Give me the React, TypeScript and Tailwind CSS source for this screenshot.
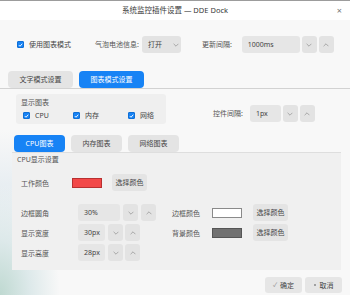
import React from 'react';

const Check = () => (
  <span className="w-[7px] h-[7px] rounded-[1px] bg-[#1783f5] border border-[#0f6fd6] flex items-center justify-center shrink-0">
    <svg viewBox="0 0 8 8" className="w-[6px] h-[6px]">
      <path d="M1.3 4.1 3.2 6 6.8 1.9" stroke="white" strokeWidth="1.5" fill="none" />
    </svg>
  </span>
);

const Chevron = ({ up = false }: { up?: boolean }) => (
  <svg viewBox="0 0 10 6" className="w-[6px] h-[4px]">
    <path d={up ? 'M1 5l4-4 4 4' : 'M1 1l4 4 4-4'} stroke="#8a8a8a" strokeWidth="1.1" fill="none" />
  </svg>
);

const Spin = ({ up = false }: { up?: boolean }) => (
  <button className="w-[15px] h-[17px] rounded-[3px] bg-[#e3e3e3] flex items-center justify-center shrink-0">
    <Chevron up={up} />
  </button>
);

const Field = ({ value, w }: { value: string; w: string }) => (
  <div className={`${w} h-[17px] rounded-[3px] bg-[#e6e6e6] flex items-center pl-[6px] text-[#444] shrink-0`}>{value}</div>
);

const ColorBtn = () => (
  <button className="w-[35px] h-[17px] rounded-[3px] bg-[#e4e4e4] flex items-center justify-center text-[#444] shrink-0">
    选择颜色
  </button>
);

export default function App() {
  return (
    <div className="w-[350px] h-[295px] flex flex-col overflow-hidden font-['Noto_Sans','Noto_Sans_CJK_SC',sans-serif] text-[7px] leading-none text-[#555]">
      {/* TITLE BAR */}
      <div className="h-[20px] shrink-0 bg-white border-t border-[#9c9c9c] grid grid-cols-[1fr_auto_1fr] items-center">
        <span />
        <span className="text-[7.5px] text-[#3a3a3a]">系统监控插件设置 — DDE Dock</span>
        <span className="flex justify-end pr-[8px] text-[9px] text-[#777]">×</span>
      </div>

      {/* BODY */}
      <div className="flex-1 flex flex-col bg-[#f8f8f8] bg-[radial-gradient(ellipse_60px_110px_at_0%_100%,#bfd9d1,#dde9ea_50%,transparent_100%),linear-gradient(to_bottom,transparent_40%,#e8eef2_60%,transparent_100%)] bg-no-repeat bg-[length:100%_100%,20px_100%]">
        {/* top options */}
        <div className="mt-[16px] h-[17px] flex items-center pl-[17px]">
          <Check />
          <span className="ml-[5px] text-[#444]">使用图表模式</span>
          <span className="ml-[24px]">气泡电池信息:</span>
          <button className="ml-[3px] w-[39px] h-[17px] rounded-[3px] bg-[#e3e3e3] flex items-center pl-[6px] text-[#444]">
            打开
            <span className="ml-[11px] flex"><Chevron /></span>
          </button>
          <span className="ml-[21px]">更新间隔:</span>
          <div className="ml-[10px]"><Field value="1000ms" w="w-[58px]" /></div>
          <div className="ml-[2px]"><Spin /></div>
          <div className="ml-[2px]"><Spin up /></div>
        </div>

        {/* mode tabs */}
        <div className="mt-[18px] h-[18px] flex gap-[6px] pl-[8px] border-b border-[#d2d2d2]">
          <button className="w-[65px] h-[17px] rounded-[4px] bg-[#e4e4e4] text-[#444]">文字模式设置</button>
          <button className="w-[65px] h-[17px] rounded-[4px] bg-[#1783f5] text-white">图表模式设置</button>
        </div>

        {/* chart toggles */}
        <div className="mt-[5px] flex">
          <div className="ml-[16px] w-[150px] h-[30px] rounded-[3px] bg-[#efefef] flex flex-col pl-[5px]">
            <span className="mt-[5px] text-[#555]">显示图表</span>
            <div className="mt-[6px] flex items-center pl-[2px] text-[#444]">
              <Check />
              <span className="ml-[5px] w-[38px]">CPU</span>
              <Check />
              <span className="ml-[5px] w-[43px]">内存</span>
              <Check />
              <span className="ml-[5px]">网络</span>
            </div>
          </div>
          <div className="ml-[47px] mt-[11px] h-[17px] flex items-center">
            <span>控件间隔:</span>
            <div className="ml-[7px]"><Field value="1px" w="w-[31px]" /></div>
            <div className="ml-[2px]"><Spin /></div>
            <div className="ml-[2px]"><Spin up /></div>
          </div>
        </div>

        {/* chart tabs */}
        <div className="mt-[11px] h-[17px] flex gap-[6px] pl-[14px]">
          <button className="w-[51px] h-[17px] rounded-[4px] bg-[#1783f5] text-white">CPU图表</button>
          <button className="w-[51px] h-[17px] rounded-[4px] bg-[#e4e4e4] text-[#444]">内存图表</button>
          <button className="w-[51px] h-[17px] rounded-[4px] bg-[#e4e4e4] text-[#444]">网络图表</button>
        </div>

        {/* CPU panel */}
        <div className="ml-[12px] w-[329px] h-[118px] bg-[#f0f0f0] border-t border-[#dedede] flex flex-col">
          <span className="mt-[3px] pl-[5px] text-[#555]">CPU显示设置</span>

          <div className="mt-[11px] pl-[9px] flex items-center h-[17px]">
            <span className="w-[51px] pt-[2px]">工作颜色</span>
            <span className="w-[30px] h-[10px] bg-[#f24848] border border-[#b83030]" />
            <div className="ml-[10px]"><ColorBtn /></div>
          </div>

          <div className="mt-[13px] pl-[9px] flex items-center h-[17px]">
            <div className="w-[151px] flex items-center">
              <span className="w-[57px] pt-[2px]">边框圆角</span>
              <Field value="30%" w="w-[42px]" />
              <div className="ml-[3px]"><Spin /></div>
              <div className="ml-[3px]"><Spin up /></div>
            </div>
            <span className="w-[40px] pt-[2px]">边框颜色</span>
            <span className="w-[30px] h-[10px] bg-white border border-[#8a8a8a]" />
            <div className="ml-[11px]"><ColorBtn /></div>
          </div>

          <div className="mt-[3px] pl-[9px] flex items-center h-[17px]">
            <div className="w-[151px] flex items-center">
              <span className="w-[57px] pt-[2px]">显示宽度</span>
              <Field value="30px" w="w-[27px]" />
              <div className="ml-[3px]"><Spin /></div>
              <div className="ml-[2px]"><Spin up /></div>
            </div>
            <span className="w-[40px] pt-[2px]">背景颜色</span>
            <span className="w-[30px] h-[10px] bg-[#717171] border border-[#555]" />
            <div className="ml-[11px]"><ColorBtn /></div>
          </div>

          <div className="mt-[3px] pl-[9px] flex items-center h-[17px]">
            <span className="w-[57px] pt-[2px]">显示高度</span>
            <Field value="28px" w="w-[27px]" />
            <div className="ml-[3px]"><Spin /></div>
            <div className="ml-[2px]"><Spin up /></div>
          </div>
        </div>

        {/* footer */}
        <div className="mt-[7px] flex justify-end gap-[3px] pr-[8px]">
          <button className="w-[37px] h-[16px] rounded-[3px] bg-[#e6e6e6] flex items-center justify-center gap-[3px] text-[#444]">
            <span className="text-[6px] text-[#888]">✓</span>确定
          </button>
          <button className="w-[37px] h-[16px] rounded-[3px] bg-[#e6e6e6] flex items-center justify-center gap-[4px] text-[#444]">
            <span className="w-[2px] h-[2px] rounded-full bg-[#888]" />取消
          </button>
        </div>
      </div>
    </div>
  );
}
